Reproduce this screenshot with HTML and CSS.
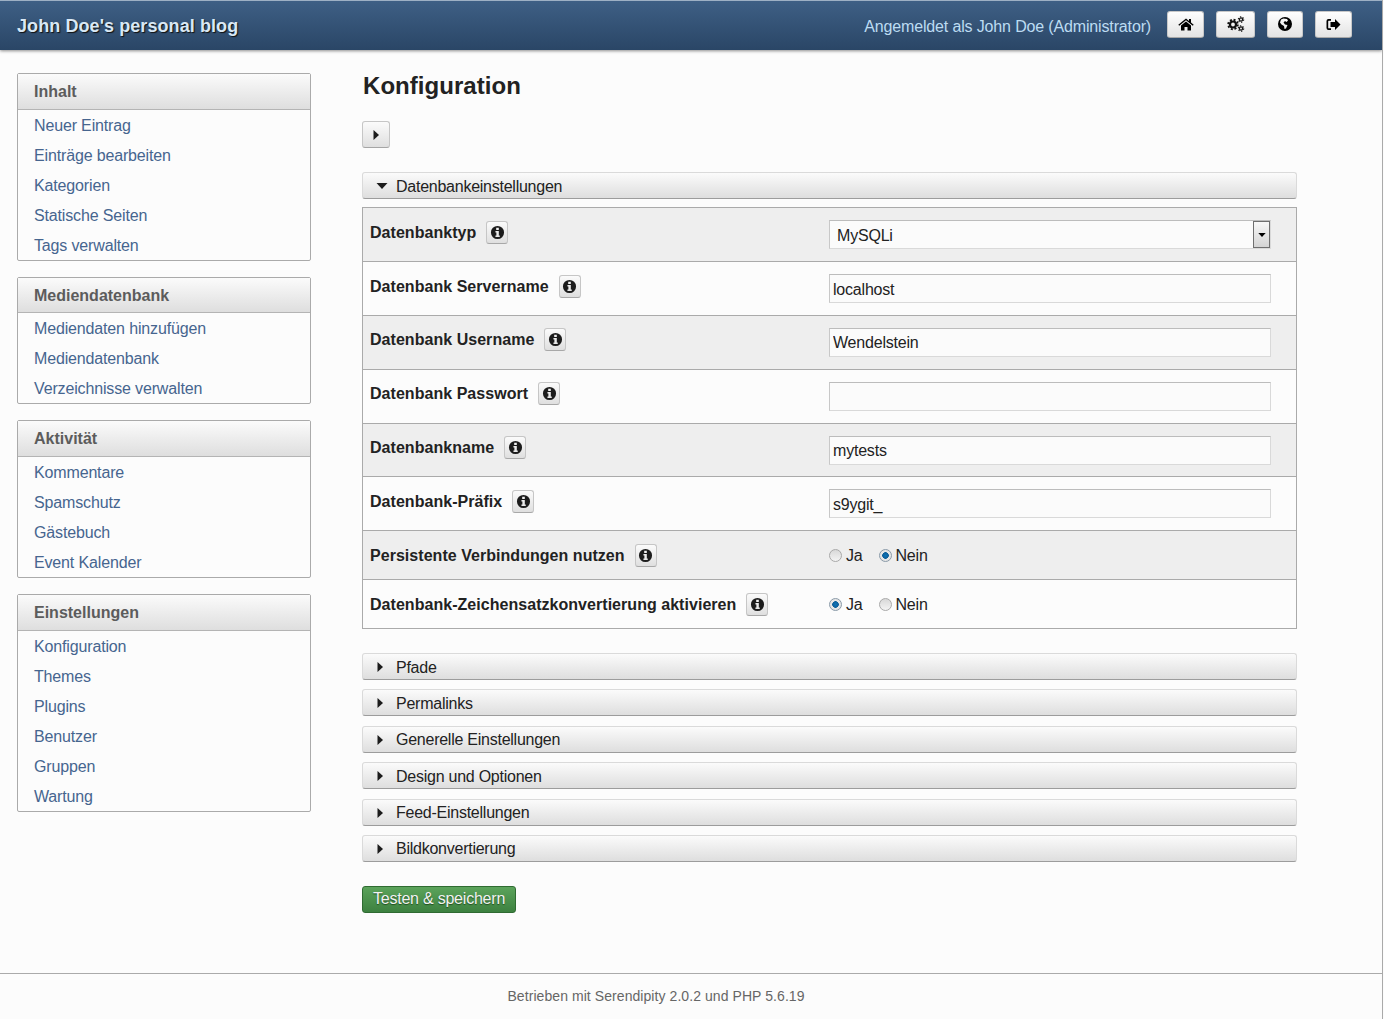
FILE: index.html
```html
<!DOCTYPE html>
<html lang="de">
<head>
    <meta charset="UTF-8">
    <title>Konfiguration</title>
    <link rel="stylesheet" href="styles.css">
</head>
<body>
    <svg class="defs">
        <symbol id="i-info" viewBox="0 0 16 16"><path fill-rule="evenodd" d="M8 1a7 7 0 1 0 0 14A7 7 0 0 0 8 1zM6.600 3h2.800v2.200H6.600zM5.800 6.400h3.600v4.800h1v1.600H5.800v-1.600h1V8h-1z"/></symbol>
        <symbol id="i-right" viewBox="0 0 8 12"><path d="M1.500 1 7 6l-5.500 5z"/></symbol>
        <symbol id="i-down" viewBox="0 0 12 8"><path d="M.5 1h11L6 7z"/></symbol>
    </svg>

    <header class="topbar">
        <h1 class="site-title">John Doe's personal blog</h1>
        <div class="user-nav">
            <span class="user-name">Angemeldet als John Doe (Administrator)</span>
            <a class="nav-btn nav-home" href="#"><svg width="16" height="13" viewBox="0 0 16 13"><path d="M8 .5.300 6.800l.9 1L8 2.300l6.800 5.500.9-1L13 4.600V1h-2v2L8 .5z"/><path d="M8 3.500 3 7.600V12.500h3.500V9h3v3.500H13V7.600z"/></svg></a>
            <a class="nav-btn nav-gear" href="#"><svg width="18" height="16" viewBox="0 0 18 16"><g fill="none" stroke="#111"><circle cx="6" cy="8.500" r="3" stroke-width="2.200"/><circle cx="6" cy="8.500" r="4.800" stroke-width="1.800" stroke-dasharray="2 1.770"/><circle cx="14" cy="3.500" r="1.600" stroke-width="1.300"/><circle cx="14" cy="3.500" r="2.700" stroke-width="1.100" stroke-dasharray="1.300 1.530"/><circle cx="14" cy="12.500" r="1.600" stroke-width="1.300"/><circle cx="14" cy="12.500" r="2.700" stroke-width="1.100" stroke-dasharray="1.300 1.530"/></g></svg></a>
            <a class="nav-btn nav-globe" href="#"><svg width="14" height="14" viewBox="0 0 14 14"><path fill-rule="evenodd" d="M7 0a7 7 0 1 0 0 14A7 7 0 0 0 7 0zM3 2.500 5.500 1.500 9 2l1 1.500L8.500 5 7 4 5.500 5.500 7 7.500l2.500.5L8 11.500 6.500 12 6 9 3.500 7.500 2 5.500z"/></svg></a>
            <a class="nav-btn nav-out" href="#"><svg width="15" height="13" viewBox="0 0 15 13"><path d="M5 1H2.500A2 2 0 0 0 .5 3v7a2 2 0 0 0 2 2H5v-1.700H2.800a.6.600 0 0 1-.6-.6V3.300a.6.600 0 0 1 .6-.6H5z"/><path d="M9 1v3H4.500v5H9v3l5.500-5.500z"/></svg></a>
        </div>
    </header>

    <div class="page">
        <nav class="sidebar">
            <section class="menu-box">
                <h3>Inhalt</h3>
                <ul>
                    <li><a href="#">Neuer Eintrag</a></li>
                    <li><a href="#">Einträge bearbeiten</a></li>
                    <li><a href="#">Kategorien</a></li>
                    <li><a href="#">Statische Seiten</a></li>
                    <li><a href="#">Tags verwalten</a></li>
                </ul>
            </section>
            <section class="menu-box menu-short">
                <h3>Mediendatenbank</h3>
                <ul>
                    <li><a href="#">Mediendaten hinzufügen</a></li>
                    <li><a href="#">Mediendatenbank</a></li>
                    <li><a href="#">Verzeichnisse verwalten</a></li>
                </ul>
            </section>
            <section class="menu-box">
                <h3>Aktivität</h3>
                <ul>
                    <li><a href="#">Kommentare</a></li>
                    <li><a href="#">Spamschutz</a></li>
                    <li><a href="#">Gästebuch</a></li>
                    <li><a href="#">Event Kalender</a></li>
                </ul>
            </section>
            <section class="menu-box">
                <h3>Einstellungen</h3>
                <ul>
                    <li><a href="#">Konfiguration</a></li>
                    <li><a href="#">Themes</a></li>
                    <li><a href="#">Plugins</a></li>
                    <li><a href="#">Benutzer</a></li>
                    <li><a href="#">Gruppen</a></li>
                    <li><a href="#">Wartung</a></li>
                </ul>
            </section>
        </nav>

        <main class="content">
            <h2 class="page-title">Konfiguration</h2>
            <button class="toggle-all" type="button"><svg class="arrow-right"><use href="#i-right"/></svg></button>

            <button class="section-head section-open" type="button"><svg class="arrow-down"><use href="#i-down"/></svg>Datenbankeinstellungen</button>
            <div class="config-table">
                <div class="config-row row-tight">
                    <div class="config-label"><strong>Datenbanktyp</strong><span class="info-btn"><svg><use href="#i-info"/></svg></span></div>
                    <div class="config-value">
                        <div class="fake-select"><span>MySQLi</span><span class="select-arrow"><svg><use href="#i-down"/></svg></span></div>
                    </div>
                </div>
                <div class="config-row row-tall">
                    <div class="config-label"><strong>Datenbank Servername</strong><span class="info-btn"><svg><use href="#i-info"/></svg></span></div>
                    <div class="config-value"><input class="text-input" type="text" value="localhost"></div>
                </div>
                <div class="config-row row-tall row-up">
                    <div class="config-label"><strong>Datenbank Username</strong><span class="info-btn"><svg><use href="#i-info"/></svg></span></div>
                    <div class="config-value"><input class="text-input" type="text" value="Wendelstein"></div>
                </div>
                <div class="config-row row-tall row-up">
                    <div class="config-label"><strong>Datenbank Passwort</strong><span class="info-btn"><svg><use href="#i-info"/></svg></span></div>
                    <div class="config-value"><input class="text-input" type="text" value=""></div>
                </div>
                <div class="config-row row-tight row-up">
                    <div class="config-label"><strong>Datenbankname</strong><span class="info-btn"><svg><use href="#i-info"/></svg></span></div>
                    <div class="config-value"><input class="text-input" type="text" value="mytests"></div>
                </div>
                <div class="config-row row-tall">
                    <div class="config-label"><strong>Datenbank-Präfix</strong><span class="info-btn"><svg><use href="#i-info"/></svg></span></div>
                    <div class="config-value"><input class="text-input" type="text" value="s9ygit_"></div>
                </div>
                <div class="config-row row-radio">
                    <div class="config-label"><strong>Persistente Verbindungen nutzen</strong><span class="info-btn"><svg><use href="#i-info"/></svg></span></div>
                    <div class="config-value radio-group">
                        <span class="radio-item"><i class="radio"></i>Ja</span>
                        <span class="radio-item"><i class="radio radio-on"></i>Nein</span>
                    </div>
                </div>
                <div class="config-row row-radio">
                    <div class="config-label"><strong>Datenbank-Zeichensatzkonvertierung aktivieren</strong><span class="info-btn"><svg><use href="#i-info"/></svg></span></div>
                    <div class="config-value radio-group">
                        <span class="radio-item"><i class="radio radio-on"></i>Ja</span>
                        <span class="radio-item"><i class="radio"></i>Nein</span>
                    </div>
                </div>
            </div>

            <div class="section-list">
                <button class="section-head" type="button"><svg class="arrow-right"><use href="#i-right"/></svg>Pfade</button>
                <button class="section-head" type="button"><svg class="arrow-right"><use href="#i-right"/></svg>Permalinks</button>
                <button class="section-head" type="button"><svg class="arrow-right"><use href="#i-right"/></svg>Generelle Einstellungen</button>
                <button class="section-head" type="button"><svg class="arrow-right"><use href="#i-right"/></svg>Design und Optionen</button>
                <button class="section-head" type="button"><svg class="arrow-right"><use href="#i-right"/></svg>Feed-Einstellungen</button>
                <button class="section-head" type="button"><svg class="arrow-right"><use href="#i-right"/></svg>Bildkonvertierung</button>
            </div>

            <button class="save-btn" type="button">Testen &amp; speichern</button>
        </main>
    </div>

    <footer class="footer">Betrieben mit Serendipity 2.0.2 und PHP 5.6.19</footer>
</body>
</html>
```

FILE: styles.css
```css
html {
    background: #fcfcfc;
}
body {
    margin: 0;
    width: 1382px;
    height: 1019px;
    box-sizing: content-box;
    border-right: 1px solid #aaa;
    background: #fcfcfc;
    font-family: "Liberation Sans", Arial, sans-serif;
    font-size: 16px;
    color: #222;
    overflow: hidden;
}
.defs {
    display: none;
}

/* top bar */
.topbar {
    display: flex;
    align-items: center;
    justify-content: space-between;
    box-sizing: border-box;
    height: 50px;
    padding: 1px 30px 2px 17px;
    border-top: 1px solid #9db0c4;
    background: linear-gradient(#3e5f85, #2a4666);
    box-shadow: 0 1px 3px rgba(0, 0, 0, 0.45);
}
.site-title {
    margin: 2px 0 0;
    font-size: 18px;
    font-weight: bold;
    letter-spacing: 0.08px;
    color: #d9e8f5;
    text-shadow: 1px 1px 1px #111;
}
.user-nav {
    display: flex;
    align-items: center;
    gap: 12px;
}
.user-name {
    margin: 4px 4px 0 0;
    letter-spacing: -0.15px;
    color: #bcdcf2;
}
.nav-btn {
    display: flex;
    align-items: center;
    justify-content: center;
    box-sizing: border-box;
    height: 27px;
    margin-bottom: 2px;
    background: linear-gradient(#fefefe, #e3e3e3);
    border: 1px solid #c8c8c8;
    border-bottom-color: #a8a8a8;
    border-radius: 3px;
}
.nav-home { width: 37px; }
.nav-gear { width: 39px; }
.nav-globe { width: 36px; }
.nav-out { width: 37px; }

/* page layout */
.page {
    display: flex;
    height: 923px;
}
.sidebar {
    display: flex;
    flex-direction: column;
    gap: 16px;
    width: 294px;
    margin: 23px 51px 0 17px;
}
.menu-box {
    border: 1px solid #aaa;
    border-radius: 2px;
}
.menu-box h3 {
    margin: 0;
    padding: 0 16px;
    height: 35px;
    line-height: 35px;
    font-size: 16px;
    color: #5c5c5c;
    background: linear-gradient(#fbfbfb, #dedede);
    border-bottom: 1px solid #b4b4b4;
}
.menu-short h3 {
    height: 34px;
}
.menu-box ul {
    list-style: none;
    margin: 0;
    padding: 0;
}
.menu-box li {
    height: 30px;
    line-height: 32px;
    padding-left: 16px;
}
.menu-box a {
    letter-spacing: -0.15px;
    color: #46658f;
    text-decoration: none;
}

/* main column */
.content {
    width: 935px;
}
.page-title {
    margin: 0 0 0 1px;
    padding-top: 21px;
    height: 50px;
    line-height: 29px;
    font-size: 24px;
    letter-spacing: 0.05px;
    color: #222;
}
.toggle-all {
    display: block;
    width: 28px;
    height: 27px;
    margin-bottom: 24px;
    padding: 0;
    background: linear-gradient(#fbfbfb, #dfdfdf);
    border: 1px solid #c6c6c6;
    border-bottom-color: #a5a5a5;
    border-radius: 3px;
}
.arrow-right {
    width: 8px;
    height: 12px;
    fill: #1c1c1c;
    vertical-align: middle;
}
.arrow-down {
    width: 12px;
    height: 8px;
    fill: #1c1c1c;
    vertical-align: middle;
}
.section-head {
    display: block;
    box-sizing: border-box;
    width: 100%;
    height: 27px;
    padding: 2px 0 0 33px;
    text-align: left;
    font: 16px "Liberation Sans", Arial, sans-serif;
    letter-spacing: -0.25px;
    color: #222;
    background: linear-gradient(#fbfbfb, #dedede);
    border: 1px solid #dadada;
    border-bottom-color: #9c9c9c;
    border-radius: 3px;
    position: relative;
}
.section-head svg {
    position: absolute;
    left: 13px;
    top: 7px;
}
.section-open svg {
    top: 9px;
}
.config-table {
    margin-top: 8px;
    border: 1px solid #aaa;
}
.config-row {
    display: flex;
    box-sizing: border-box;
    border-top: 1px solid #aaa;
}
.config-row:first-child {
    border-top: none;
}
.config-row:nth-child(odd) {
    background: #eee;
}
.row-tall {
    height: 54px;
}
.row-tight {
    height: 53px;
}
.row-radio {
    height: 49px;
}
.config-label {
    display: flex;
    align-items: center;
    width: 459px;
    padding: 12px 0 0 7px;
    height: 24px;
    box-sizing: content-box;
}
.row-up .config-label {
    padding-top: 11px;
}
.row-up .text-input {
    padding-top: 0;
}
.config-label strong {
    margin-top: 2px;
    letter-spacing: 0.04px;
}
.info-btn {
    display: flex;
    align-items: center;
    justify-content: center;
    box-sizing: border-box;
    width: 22px;
    height: 23px;
    margin-left: 10px;
    background: linear-gradient(#fbfbfb, #dfdfdf);
    border: 1px solid #c6c6c6;
    border-bottom-color: #a8a8a8;
    border-radius: 3px;
}
.info-btn svg {
    width: 15px;
    height: 15px;
    fill: #1c1c1c;
}
.config-value {
    padding-top: 12px;
    letter-spacing: -0.2px;
}
.text-input {
    display: block;
    box-sizing: border-box;
    width: 442px;
    height: 29px;
    padding: 2px 3px 0;
    font: 16px "Liberation Sans", Arial, sans-serif;
    letter-spacing: -0.2px;
    color: #222;
    background: #fbfbfb;
    border: 1px solid #d9d9d9;
    border-top-color: #bcbcbc;
    border-left-color: #c8c8c8;
    outline: none;
}
.fake-select {
    display: flex;
    align-items: center;
    justify-content: space-between;
    box-sizing: border-box;
    width: 442px;
    height: 29px;
    padding-left: 7px;
    background: #fbfbfb;
    border: 1px solid #d9d9d9;
    border-top-color: #bcbcbc;
    border-left-color: #c8c8c8;
}
.fake-select span:first-child {
    margin-top: 2px;
}
.select-arrow {
    display: flex;
    align-items: center;
    justify-content: center;
    box-sizing: border-box;
    width: 17px;
    height: 27px;
    background: linear-gradient(#f8f8f8, #d4d4d4);
    border: 1px solid #6f6f6f;
}
.select-arrow svg {
    width: 8px;
    height: 6px;
    fill: #000;
}
.radio-group {
    display: flex;
    gap: 16px;
    padding-top: 16px;
}
.radio-item {
    display: flex;
    align-items: center;
    height: 18px;
}
.radio {
    box-sizing: border-box;
    width: 13px;
    height: 13px;
    margin: 0 4px 1px 0;
    border: 1px solid #a9a9a9;
    border-radius: 50%;
    background: linear-gradient(#d8d8d8, #f4f4f4);
}
.radio-on {
    border-color: #8a9aa8;
    background: radial-gradient(circle, #0d74b8 0, #0d5f9a 3px, #e6e6e6 3.6px);
}
.section-list {
    display: flex;
    flex-direction: column;
    gap: 9.4px;
    margin-top: 24px;
}
.save-btn {
    display: block;
    box-sizing: border-box;
    width: 154px;
    height: 27px;
    margin-top: 24px;
    padding: 0;
    font: 16px "Liberation Sans", Arial, sans-serif;
    letter-spacing: -0.22px;
    color: #f2f2f2;
    text-shadow: 0 1px 1px #1d4d1d;
    background: linear-gradient(#5ba35b, #3d8140);
    border: 1px solid #2f6b32;
    border-radius: 3px;
}

/* footer */
.footer {
    box-sizing: border-box;
    height: 46px;
    padding: 14px 70px 0 0;
    text-align: center;
    font-size: 14px;
    letter-spacing: 0.07px;
    color: #666;
    border-top: 1px solid #aaa;
}
```
